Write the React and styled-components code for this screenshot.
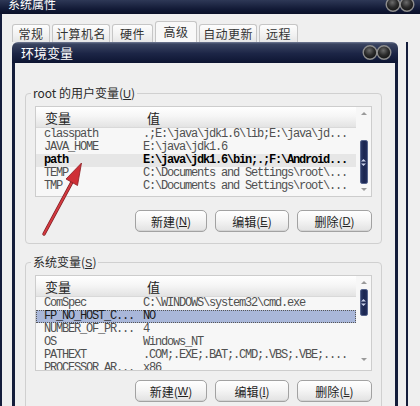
import React from "react";
import styled, { createGlobalStyle } from "styled-components";

const CJK = `"Noto Sans CJK SC", "Noto Sans", sans-serif`;
const MONO = `"Liberation Mono", "DejaVu Sans Mono", monospace`;
const NAVY = "#141d3b";

const Global = createGlobalStyle`
  html, body { margin: 0; padding: 0; background: #efefef; }
  body { font-family: ${CJK}; overflow: hidden; }
`;

const Screen = styled.div`
  position: relative;
  width: 420px;
  height: 406px;
  overflow: hidden;
  background: #efefef;
  display: flex;
  flex-direction: column;
`;

const OuterTitle = styled.div`
  height: 14px;
  flex: none;
  display: flex;
  justify-content: space-between;
  align-items: flex-start;
  background: linear-gradient(#2e3856, #121a36 65%, #0a1029);
  overflow: hidden;
  padding: 0 5px 0 8px;
`;

const TitleText = styled.span`
  color: #fff;
  font-size: ${(p) => p.$size}px;
  line-height: 16px;
  margin-top: ${(p) => p.$mt}px;
  white-space: nowrap;
`;

const BinoSvg = styled.svg`
  flex: none;
  margin-top: ${(p) => p.$mt || 0}px;
`;

const OuterBody = styled.div`
  flex: 1;
  display: flex;
  flex-direction: column;
  border-left: 2px solid ${NAVY};
  padding-left: 10px;
  min-height: 0;
`;

const TabStrip = styled.div`
  height: 28px;
  flex: none;
  display: flex;
  align-items: flex-end;
  gap: 2px;
`;

const Tab = styled.div`
  box-sizing: border-box;
  width: ${(p) => p.$w}px;
  height: ${(p) => (p.$active ? 22 : 18)}px;
  margin-bottom: ${(p) => (p.$active ? -1 : 0)}px;
  border: 1px solid #c6c6c6;
  border-bottom: none;
  border-radius: 3px 3px 0 0;
  background: ${(p) =>
    p.$active ? "#f8f8f8" : "linear-gradient(#fdfdfd, #f1f1f1 60%, #e6e6e6)"};
  color: #333;
  font-size: 12px;
  letter-spacing: 0.4px;
  display: flex;
  align-items: center;
  justify-content: center;
  padding-bottom: ${(p) => (p.$active ? 2 : 0)}px;
`;

const PanelRow = styled.div`
  flex: 1;
  display: flex;
  min-height: 0;
`;

const InnerWindow = styled.div`
  width: 386px;
  flex: none;
  display: flex;
  flex-direction: column;
`;

const InnerTitle = styled.div`
  height: 21px;
  flex: none;
  border-radius: 6px 6px 0 0;
  background: linear-gradient(#737c96 0, #3a4460 2px, #1c2546 55%, #0d1532);
  display: flex;
  align-items: center;
  justify-content: space-between;
  padding: 0 6px 0 9px;
`;

const InnerBody = styled.div`
  flex: 1;
  border-left: 3px solid ${NAVY};
  border-right: 3px solid ${NAVY};
  background: #efefef;
  padding: 23px 13px 0 10px;
  display: flex;
  flex-direction: column;
`;

const RightGap = styled.div`
  width: 8px;
  flex: none;
`;

const RightEdge = styled.div`
  width: 2px;
  flex: none;
  background: ${NAVY};
`;

const Group = styled.fieldset`
  margin: ${(p) => p.$mt}px 0 0 0;
  padding: 0 9px 11px 9px;
  border: 1px solid #d0d0d0;
  border-radius: 4px;
  min-width: 0;
  flex: none;
`;

const Legend = styled.legend`
  padding: 0 2px;
  margin-left: -4px;
  font-size: 12px;
  line-height: 14px;
  color: #2a2a2a;
`;

const Mn = styled.u`
  font-family: "Liberation Sans", sans-serif;
  font-size: 11px;
`;

const List = styled.div`
  margin-top: 5px;
  height: ${(p) => p.$h}px;
  box-sizing: border-box;
  border: 1px solid #cdcdcd;
  background: #f7f7f7;
  display: flex;
  overflow: hidden;
`;

const ListMain = styled.div`
  flex: 1;
  min-width: 0;
  display: flex;
  flex-direction: column;
`;

const Header = styled.div`
  height: 21px;
  flex: none;
  box-sizing: border-box;
  display: grid;
  grid-template-columns: 102px 1fr;
  align-items: center;
  background: linear-gradient(#ffffff, #f6f6f6 45%, #e3e3e3);
  border-bottom: 1px solid #d9d9d9;
  font-size: 13px;
  color: #222;
`;

const HeadCell = styled.span`
  padding-left: 9px;
`;

const Row = styled.div`
  height: 13px;
  flex: none;
  box-sizing: border-box;
  display: grid;
  grid-template-columns: 99px 1fr;
  align-items: center;
  font-family: ${MONO};
  font-size: 12px;
  letter-spacing: -1.2px;
  line-height: 13px;
  white-space: nowrap;
  color: ${(p) => (p.$bold ? "#000" : p.$sel ? "#1a1a1a" : "#505050")};
  font-weight: ${(p) => (p.$bold ? 700 : 400)};
  background: ${(p) => (p.$sel ? "#a9b7d9" : p.$bold ? "#e6e6e6" : "transparent")};
  border: 1px dotted ${(p) => (p.$sel ? "#555" : "transparent")};
  margin: 0 0 0 0;
`;

const Cell = styled.span`
  padding-left: 7px;
  overflow: hidden;
`;

const ScrollBar = styled.div`
  width: 15px;
  flex: none;
  display: flex;
  flex-direction: column;
  align-items: center;
  padding: 5px 0 ${(p) => p.$pb}px;
  box-sizing: border-box;
`;

const ArrowUp = styled.div`
  width: 0;
  height: 0;
  border-left: 3px solid transparent;
  border-right: 3px solid transparent;
  border-bottom: 3px solid #9a9a9a;
  flex: none;
`;

const ArrowDown = styled.div`
  width: 0;
  height: 0;
  border-left: 3px solid transparent;
  border-right: 3px solid transparent;
  border-top: 3px solid #9a9a9a;
  flex: none;
`;

const Thumb = styled.div`
  width: 8px;
  flex: none;
  box-sizing: border-box;
  margin-top: ${(p) => p.$top}px;
  height: ${(p) => p.$h}px;
  border-radius: 2px;
  border: 1px solid #56648c;
  background: linear-gradient(90deg, #2a3866, #1a2550 50%, #222e5c);
  display: flex;
  align-items: center;
  justify-content: center;
`;

const Spacer = styled.div`
  flex: 1;
`;

const ButtonRow = styled.div`
  margin-top: ${(p) => p.$mt}px;
  display: flex;
  justify-content: flex-end;
  gap: 8px;
`;

const Button = styled.div`
  width: ${(p) => p.$w}px;
  height: 22px;
  box-sizing: border-box;
  border: 1px solid #a2a2a2;
  border-radius: 5px;
  background: linear-gradient(#ffffff, #f5f5f5 45%, #e2e2e2);
  box-shadow: inset 0 -1px 0 #d4d4d4;
  display: flex;
  align-items: center;
  justify-content: center;
  font-size: 12px;
  color: #222;
`;

const ArrowOverlay = styled.svg`
  position: absolute;
  left: 38px;
  top: 158px;
  pointer-events: none;
`;

function Binoculars({ mt }) {
  return (
    <BinoSvg $mt={mt} width="30" height="19" viewBox="0 0 30 19">
      <defs>
        <radialGradient id="bino" cx="45%" cy="35%" r="65%">
          <stop offset="0" stopColor="#6c6c6c" />
          <stop offset="0.55" stopColor="#2b2b2b" />
          <stop offset="1" stopColor="#121212" />
        </radialGradient>
      </defs>
      <rect x="8" y="6.5" width="14" height="6" fill="#1b1b1b" />
      <circle cx="8" cy="9.5" r="6.8" fill="url(#bino)" stroke="#8e8e8e" strokeWidth="1.4" />
      <circle cx="22" cy="9.5" r="6.8" fill="url(#bino)" stroke="#8e8e8e" strokeWidth="1.4" />
    </BinoSvg>
  );
}

function Grip() {
  return (
    <svg width="5" height="7" viewBox="0 0 5 7">
      <path d="M2.5 0 L5 2.5 L0 2.5 Z M0 4.5 L5 4.5 L2.5 7 Z" fill="#c9d1ea" />
    </svg>
  );
}

const userRows = [
  ["classpath", ".;E:\\java\\jdk1.6\\lib;E:\\java\\jd..."],
  ["JAVA_HOME", "E:\\java\\jdk1.6"],
  ["path", "E:\\java\\jdk1.6\\bin;.;F:\\Android...", "bold"],
  ["TEMP", "C:\\Documents and Settings\\root\\..."],
  ["TMP", "C:\\Documents and Settings\\root\\..."],
];

const sysRows = [
  ["ComSpec", "C:\\WINDOWS\\system32\\cmd.exe"],
  ["FP_NO_HOST_C...", "NO", "sel"],
  ["NUMBER_OF_PR...", "4"],
  ["OS", "Windows_NT"],
  ["PATHEXT", ".COM;.EXE;.BAT;.CMD;.VBS;.VBE;...."],
  ["PROCESSOR_AR...", "x86"],
];

function VarList({ rows, h, thumbTop, thumbH, pb }) {
  return (
    <List $h={h}>
      <ListMain>
        <Header>
          <HeadCell>变量</HeadCell>
          <HeadCell>值</HeadCell>
        </Header>
        {rows.map(([k, v, f]) => (
          <Row key={k} $bold={f === "bold"} $sel={f === "sel"}>
            <Cell>{k}</Cell>
            <Cell>{v}</Cell>
          </Row>
        ))}
      </ListMain>
      <ScrollBar $pb={pb}>
        <ArrowUp />
        <Thumb $top={thumbTop} $h={thumbH}>
          <Grip />
        </Thumb>
        <Spacer />
        <ArrowDown />
      </ScrollBar>
    </List>
  );
}

function Buttons({ mt, keys }) {
  const labels = ["新建", "编辑", "删除"];
  const widths = [72, 74, 75];
  return (
    <ButtonRow $mt={mt}>
      {labels.map((l, i) => (
        <Button key={l} $w={widths[i]}>
          {l}(<Mn>{keys[i]}</Mn>)
        </Button>
      ))}
    </ButtonRow>
  );
}

const tabs = [
  ["常规", 38],
  ["计算机名", 58],
  ["硬件", 41],
  ["高级", 42, true],
  ["自动更新", 58],
  ["远程", 39],
];

export default function App() {
  return (
    <>
      <Global />
      <Screen>
        <OuterTitle>
          <TitleText $size={12} $mt={-4}>系统属性</TitleText>
          <Binoculars mt={-5} />
        </OuterTitle>
        <OuterBody>
          <TabStrip>
            {tabs.map(([t, w, a]) => (
              <Tab key={t} $w={w} $active={a}>
                {t}
              </Tab>
            ))}
          </TabStrip>
          <PanelRow>
            <InnerWindow>
              <InnerTitle>
                <TitleText $size={13} $mt={0}>环境变量</TitleText>
                <Binoculars />
              </InnerTitle>
              <InnerBody>
                <Group $mt={0}>
                  <Legend>
                    root 的用户变量(<Mn>U</Mn>)
                  </Legend>
                  <VarList rows={userRows} h={91} thumbTop={25} thumbH={44} pb={5} />
                  <Buttons mt={13} keys={["N", "E", "D"]} />
                </Group>
                <Group $mt={11}>
                  <Legend>
                    系统变量(<Mn>S</Mn>)
                  </Legend>
                  <VarList rows={sysRows} h={96} thumbTop={5} thumbH={27} pb={9} />
                  <Buttons mt={9} keys={["W", "I", "L"]} />
                </Group>
              </InnerBody>
            </InnerWindow>
            <RightGap />
            <RightEdge />
          </PanelRow>
        </OuterBody>
        <ArrowOverlay width="52" height="82" viewBox="38 158 52 82">
          <line x1="44" y1="234" x2="72" y2="182" stroke="#7a1a1f" strokeWidth="3.4" strokeLinecap="round" />
          <line x1="44" y1="234" x2="72" y2="182" stroke="#d23a40" strokeWidth="2" strokeLinecap="round" />
          <path d="M81.5 163 L66 179 L77.5 185.5 Z" fill="#cf2f36" stroke="#8a1c22" strokeWidth="0.8" strokeLinejoin="round" />
        </ArrowOverlay>
      </Screen>
    </>
  );
}
